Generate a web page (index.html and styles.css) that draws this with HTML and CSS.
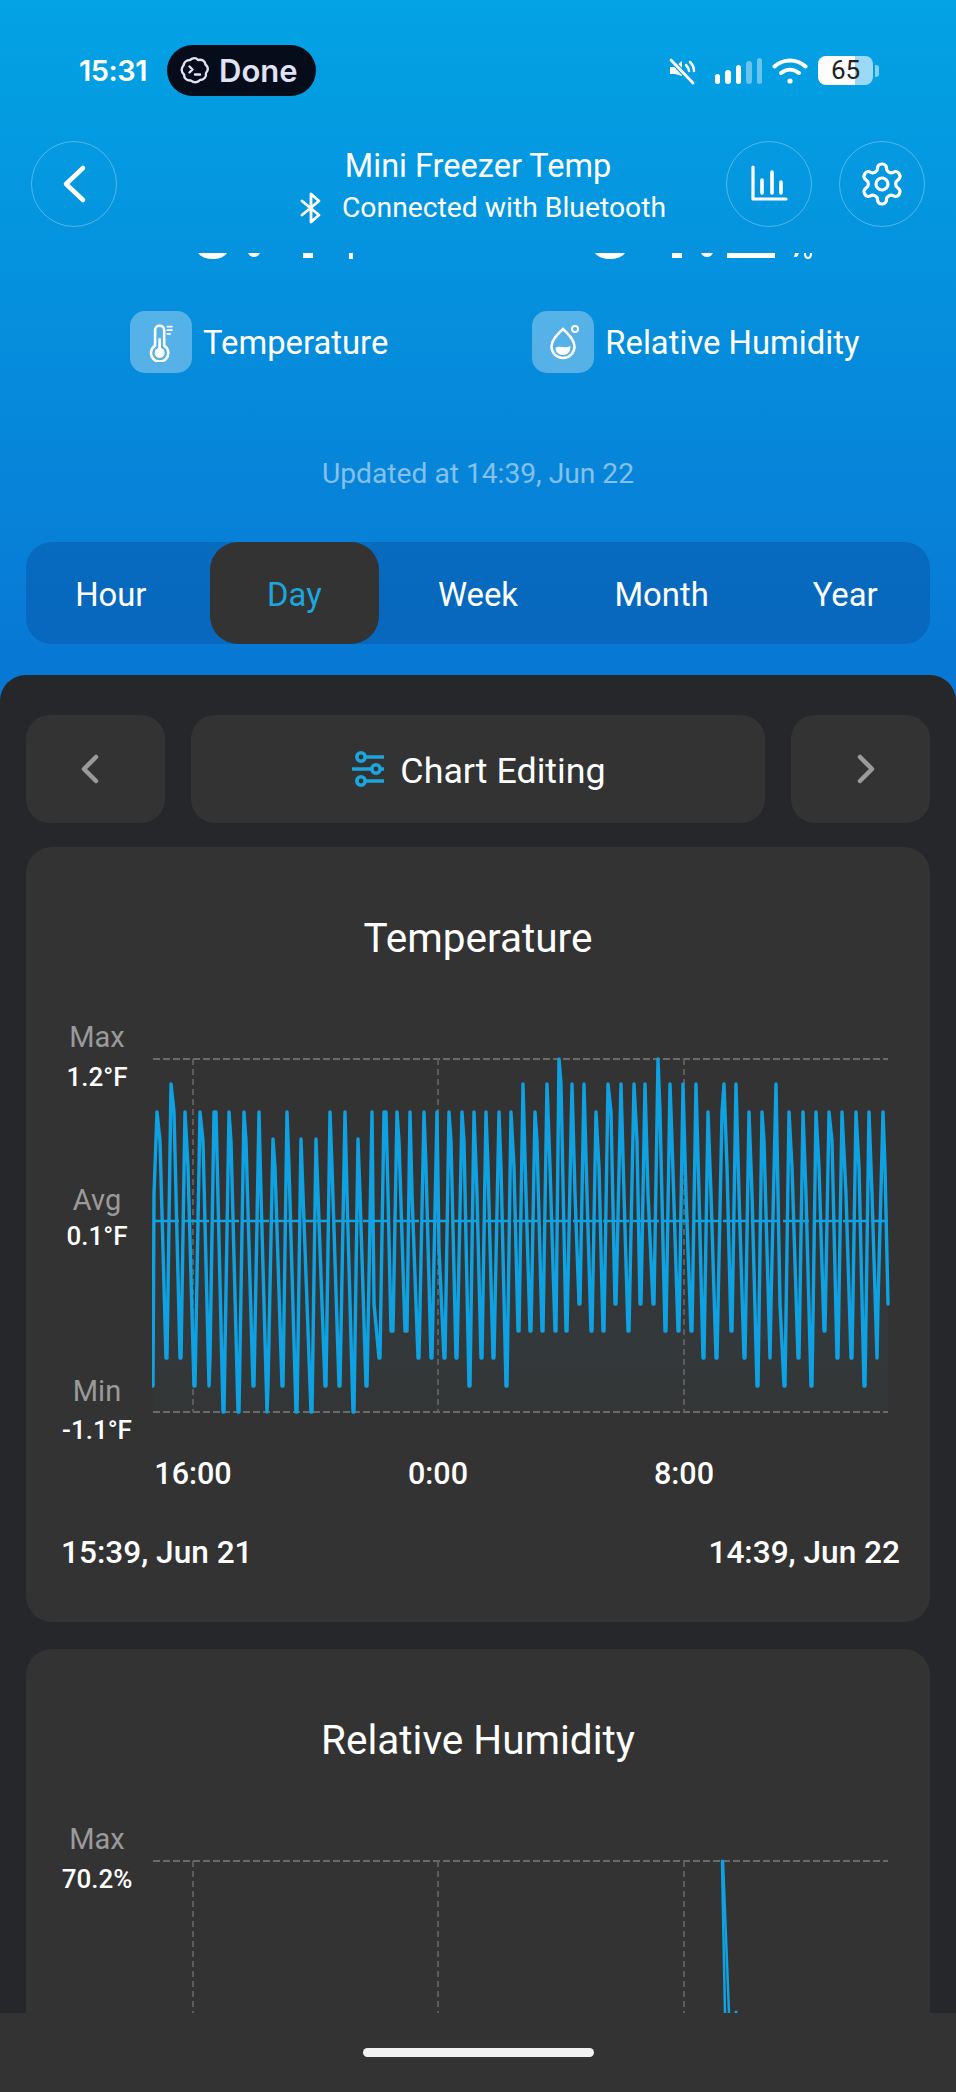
FILE: index.html
```html
<!DOCTYPE html>
<html>
<head>
	<meta charset="utf-8">
	<title>Mini Freezer Temp</title>
	<link rel="stylesheet" href="styles.css">
</head>

<body>

	<div class="screen">

		<div class="status">
			<span class="time">15:31</span>
			<div class="pill">
				<svg width="32" height="32" viewBox="0 0 32 32" fill="none" stroke="#dfe3f5" stroke-width="2.400" stroke-linecap="round" stroke-linejoin="round">
					<path d="M11 5c3-2.600 6-2.400 8 0 4-1 7 1 7.500 4.500 3 2.500 3 6 .5 8.500 .5 4-2 7-6 7-2.500 3-6.500 3-9 .5-4 .5-7-2-7-6-3-2.500-3-6.500-.5-9C5 7.500 7.500 5 11 5z"/>
					<path d="M10.500 11.500l3 3-3 3M16 19.500h5"/>
				</svg>
				<span>Done</span>
			</div>
			<div class="status-icons">
				<svg width="28" height="28" viewBox="0 0 28 28" fill="#fff">
					<path d="M2 10h5l7-6v15L7 17H2z"/>
					<path d="M18 8c2 2 3 4 3 6M22 5c2.500 2.500 4 6 4 9" fill="none" stroke="#fff" stroke-width="2.500" stroke-linecap="round"/>
					<path d="M3 3l22 23" stroke="#0a9ae0" stroke-width="5"/>
					<path d="M3 3l22 23" stroke="#fff" stroke-width="2.800" stroke-linecap="round"/>
				</svg>
				<div class="signal">
					<i class="s1"></i><i class="s2"></i><i class="s3"></i><i class="s4 dim"></i><i class="s5 dim"></i>
				</div>
				<svg class="wifi" width="36" height="28" viewBox="0 0 36 28" fill="none" stroke="#fff" stroke-width="4" stroke-linecap="round">
					<path d="M2.500 9.500c9-8 22-8 31 0"/>
					<path d="M9 16c5.500-4.500 12.500-4.500 18 0"/>
					<circle cx="18" cy="24" r="2.600" fill="#fff" stroke="none"/>
				</svg>
				<div class="battery">
					<div class="battery-body">65</div>
					<div class="battery-cap"></div>
				</div>
			</div>
		</div>

		<div class="topbar">
			<button class="round">
				<svg width="40" height="44" viewBox="0 0 40 44" fill="none" stroke="#fff" stroke-width="4.500" stroke-linecap="round" stroke-linejoin="round">
					<path d="M29 6L12 22l17 16"/>
				</svg>
			</button>
			<div class="title">
				<div class="name">Mini Freezer Temp</div>
				<div class="conn">
					<svg width="26" height="32" viewBox="0 0 24 32" fill="none" stroke="#fff" stroke-width="2.800" stroke-linecap="round" stroke-linejoin="round">
						<path d="M3 9l17 14-8 7V2l8 7L3 23"/>
					</svg>
					<span>Connected with Bluetooth</span>
				</div>
			</div>
			<div class="topbar-right">
				<button class="round">
					<svg width="44" height="44" viewBox="0 0 44 44" fill="none" stroke="#fff" stroke-width="3.200" stroke-linecap="round" stroke-linejoin="round">
						<path d="M6 5v32h33"/>
						<path d="M15 18v13M25 10v21M34 20v11" stroke-width="3.600"/>
					</svg>
				</button>
				<button class="round">
					<svg width="48" height="48" viewBox="0 0 24 24" fill="none" stroke="#fff" stroke-width="1.600" stroke-linecap="round" stroke-linejoin="round">
						<path d="M12.220 2h-.44a2 2 0 0 0-2 2v.18a2 2 0 0 1-1 1.730l-.43.25a2 2 0 0 1-2 0l-.15-.08a2 2 0 0 0-2.730.73l-.22.38a2 2 0 0 0 .73 2.730l.15.1a2 2 0 0 1 1 1.720v.51a2 2 0 0 1-1 1.740l-.15.09a2 2 0 0 0-.73 2.730l.22.38a2 2 0 0 0 2.730.73l.15-.08a2 2 0 0 1 2 0l.43.25a2 2 0 0 1 1 1.730V20a2 2 0 0 0 2 2h.44a2 2 0 0 0 2-2v-.18a2 2 0 0 1 1-1.730l.43-.25a2 2 0 0 1 2 0l.15.08a2 2 0 0 0 2.730-.73l.22-.39a2 2 0 0 0-.73-2.730l-.15-.08a2 2 0 0 1-1-1.740v-.5a2 2 0 0 1 1-1.740l.15-.09a2 2 0 0 0 .73-2.730l-.22-.38a2 2 0 0 0-2.730-.73l-.15.08a2 2 0 0 1-2 0l-.43-.25a2 2 0 0 1-1-1.730V4a2 2 0 0 0-2-2z"/>
						<circle cx="12" cy="12" r="3"/>
					</svg>
				</button>
			</div>
		</div>

		<!-- bottoms of the big readings, scrolled away under the header -->
		<svg class="cutoff" width="956" height="7" viewBox="0 0 956 7" fill="#fff">
			<path d="M198 0h29c-4 5-9 6-14 6s-11-1-15-6z"/>
			<path d="M248 0h12c-2 3-3 4-6 4s-4-1-6-4z"/>
			<rect x="303" y="0" width="10" height="5"/>
			<rect x="349" y="0" width="4" height="6"/>
			<path d="M595 0h30c-4 5-10 6-15 6s-11-1-15-6z"/>
			<rect x="672" y="0" width="10" height="5"/>
			<path d="M701 0h12c-2 3-3 4-6 4s-4-1-6-4z"/>
			<rect x="727" y="0" width="48" height="5"/>
			<path d="M795 0h4l-2 4h-3zM804 0h2c0 3 1 4 2 4s2-1 2-4h2c0 4-1 6-4 6s-4-2-4-6z"/>
		</svg>

		<div class="readings">
			<div class="reading">
				<div class="reading-icon">
					<svg width="40" height="40" viewBox="0 0 44 44" fill="none" stroke="#fff" stroke-width="2.800" stroke-linecap="round">
						<path d="M15.500 26V9a5 5 0 0 1 10 0v17a9.500 9.500 0 1 1-10 0z"/>
						<circle cx="20.500" cy="34" r="5.500" fill="#fff" stroke="none"/>
						<path d="M20.500 30V19" stroke-width="3"/>
						<path d="M29 5h5M29 9h5M29 13h3" stroke-width="2"/>
					</svg>
				</div>
				<span>Temperature</span>
			</div>
			<div class="reading">
				<div class="reading-icon">
					<svg width="44" height="44" viewBox="0 0 44 44" fill="none" stroke="#fff" stroke-width="2.500">
						<path d="M22 9c5 5 11.500 10.500 11.500 17.500a11.500 11.500 0 0 1-23 0C10.500 19.500 17 14 22 9z"/>
						<path d="M14.500 28c4-3 9 1 15-2 0 6-3 9-7.500 9s-7.500-3-7.500-7z" fill="#fff" stroke="none"/>
						<circle cx="34" cy="9" r="3" stroke-width="2"/>
					</svg>
				</div>
				<span>Relative Humidity</span>
			</div>
		</div>

		<div class="updated">Updated at 14:39, Jun 22</div>

		<div class="tabs">
			<div class="tab">Hour</div>
			<div class="tab active">Day</div>
			<div class="tab">Week</div>
			<div class="tab">Month</div>
			<div class="tab">Year</div>
		</div>

		<div class="panel">

			<div class="editbar">
				<div class="editbtn side prev">
					<svg width="20" height="30" viewBox="0 0 20 30" fill="none" stroke="#9a9a9a" stroke-width="4.500" stroke-linecap="round" stroke-linejoin="round">
						<path d="M16 3L4 15l12 12"/>
					</svg>
				</div>
				<div class="editbtn mid">
					<svg width="36" height="38" viewBox="0 0 36 38" fill="none" stroke="#1ba6de" stroke-width="3.600">
						<path d="M15 7h19M2 19h20M30 19h4M15 31h19"/>
						<circle cx="11" cy="7" r="4.200"/>
						<circle cx="26" cy="19" r="4.200"/>
						<circle cx="11" cy="31" r="4.200"/>
					</svg>
					<span>Chart Editing</span>
				</div>
				<div class="editbtn side next">
					<svg width="20" height="30" viewBox="0 0 20 30" fill="none" stroke="#9a9a9a" stroke-width="4.500" stroke-linecap="round" stroke-linejoin="round">
						<path d="M4 3l12 12L4 27"/>
					</svg>
				</div>
			</div>

			<div class="card">
				<h2>Temperature</h2>
				<div class="chart">
					<div class="axis">
						<div class="axis-group g-max"><span>Max</span><b>1.2°F</b></div>
						<div class="axis-group g-avg"><span>Avg</span><b>0.1°F</b></div>
						<div class="axis-group g-min"><span>Min</span><b>-1.1°F</b></div>
					</div>
					<svg class="plot" width="738" height="362" viewBox="152 1056 738 362" fill="none">
						<defs>
							<linearGradient id="under" x1="0" y1="0" x2="0" y2="1">
								<stop offset="0" stop-color="#3fa0c8" stop-opacity="0"/>
								<stop offset="0.6" stop-color="#3fa0c8" stop-opacity="0.05"/>
								<stop offset="1" stop-color="#3fa0c8" stop-opacity="0.02"/>
							</linearGradient>
						</defs>
						<rect x="153" y="1230" width="735" height="183" fill="url(#under)"/>
						<path class="grid" d="M153 1060H888M153 1413H888"/>
						<path class="grid upright" d="M193 1060V1413M438 1060V1413M684 1060V1413"/>
						<path class="avg" d="M153 1222H888"/>
						<polyline class="line" points="153,1387 154,1195 157,1113 160,1142 166,1359 167,1359 171,1085 174,1113 180,1359 181,1359 185,1113 188,1168 194,1387 195,1387 200,1113 203,1142 209,1387 210,1359 214,1113 216,1113 223,1413 224,1413 229,1113 231,1142 238,1413 239,1413 244,1113 246,1142 253,1387 254,1387 259,1113 261,1195 267,1413 268,1387 273,1140 275,1168 282,1387 283,1387 287,1113 289,1168 296,1413 297,1413 301,1140 303,1195 311,1413 312,1413 316,1140 318,1195 325,1387 326,1387 330,1113 332,1168 339,1387 340,1387 345,1113 347,1195 353,1413 354,1413 358,1140 360,1195 366,1387 367,1387 372,1113 374,1305 379,1359 380,1359 384,1113 386,1113 388,1195 391,1332 393,1332 397,1113 399,1142 405,1332 407,1332 410,1113 412,1195 418,1359 419,1359 424,1113 426,1168 431,1359 432,1359 437,1113 439,1250 444,1359 445,1359 449,1113 451,1142 456,1359 457,1359 462,1113 464,1142 469,1387 470,1387 474,1113 477,1195 481,1359 482,1359 486,1113 488,1168 493,1359 494,1359 499,1113 501,1168 506,1387 507,1387 511,1113 514,1168 518,1332 519,1332 523,1085 526,1195 530,1332 531,1332 535,1113 537,1142 542,1332 543,1332 547,1085 550,1168 555,1332 556,1332 559,1060 561,1085 566,1332 567,1332 572,1085 575,1195 579,1305 580,1305 584,1085 587,1195 591,1332 592,1332 596,1113 599,1168 603,1332 604,1332 608,1085 611,1113 615,1305 616,1305 621,1085 624,1195 628,1332 629,1332 634,1085 637,1142 640,1305 641,1305 645,1085 648,1195 653,1305 654,1305 658,1060 660,1113 665,1332 666,1332 670,1085 672,1142 678,1332 679,1332 683,1085 686,1195 691,1332 692,1332 696,1085 699,1195 703,1359 704,1359 708,1113 711,1195 716,1359 717,1359 722,1113 724,1085 727,1168 731,1332 732,1332 736,1085 739,1195 744,1359 745,1359 749,1113 752,1195 757,1387 758,1387 762,1113 764,1142 770,1359 771,1305 776,1085 780,1305 784,1387 785,1387 789,1113 792,1168 798,1359 799,1359 803,1113 806,1195 811,1387 812,1387 816,1113 819,1168 824,1332 825,1332 829,1113 832,1142 837,1359 838,1359 842,1113 846,1195 851,1359 852,1359 856,1113 859,1168 864,1387 865,1387 869,1113 872,1195 877,1359 878,1305 883,1113 885,1168 888,1305"/>
					</svg>
				</div>
				<div class="xlabels">
					<span>16:00</span><span>0:00</span><span>8:00</span>
				</div>
				<div class="range">
					<span>15:39, Jun 21</span><span>14:39, Jun 22</span>
				</div>
			</div>

			<div class="card">
				<h2>Relative Humidity</h2>
				<div class="chart">
					<div class="axis">
						<div class="axis-group g-max"><span>Max</span><b>70.2%</b></div>
					</div>
					<svg class="plot" width="738" height="362" viewBox="152 1857 738 362" fill="none">
						<path class="grid" d="M153 1861H888"/>
						<path class="grid upright" d="M193 1861V2213M438 1861V2213M684 1861V2213"/>
						<polyline class="line thin" points="722,1861 725,2013"/>
						<polyline class="line thin" points="723,1861 729,2013"/>
						<circle cx="736" cy="2012" r="1.500" fill="#0ea5e6"/>
					</svg>
				</div>
			</div>

		</div>

		<div class="homebar">
			<div class="indicator"></div>
		</div>

	</div>

</body>
</html>
```

FILE: styles.css
```css
* {
	padding: 0;
	margin: 0;
	box-sizing: border-box;
}
body {
	font-family: Roboto, "Liberation Sans", sans-serif;
	color: #fff;
}
.screen {
	display: flex;
	flex-direction: column;
	width: 956px;
	height: 2092px;
	overflow: hidden;
	background: linear-gradient(180deg, #03a3e4 0, #0876d4 700px);
}

/* status bar */
.status {
	display: flex;
	align-items: center;
	height: 51px;
	margin-top: 45px;
	padding: 0 79px;
}
.time {
	width: 88px;
	font-family: Inter, sans-serif;
	font-size: 29px;
	font-weight: 600;
	letter-spacing: -0.5px;
}
.pill {
	display: flex;
	align-items: center;
	gap: 8px;
	width: 149px;
	height: 51px;
	padding-left: 12px;
	border-radius: 26px;
	background: #060c1a;
	color: #dfe3f5;
	font-family: Inter, sans-serif;
	font-size: 31px;
	font-weight: 600;
}
.status-icons {
	display: flex;
	align-items: center;
	margin-left: auto;
	margin-right: -2px;
}
.signal {
	display: flex;
	align-items: flex-end;
	gap: 5px;
	height: 26px;
	margin-left: 19px;
}
.signal i {
	display: block;
	width: 5.500px;
	border-radius: 3px;
	background: #fff;
}
.signal .dim {
	background: rgba(255,255,255,.4);
}
.s1 { height: 10px; }
.s2 { height: 14px; }
.s3 { height: 19px; }
.s4 { height: 23px; }
.s5 { height: 26px; }
.wifi {
	margin-left: 10px;
}
.battery {
	display: flex;
	align-items: center;
	gap: 2px;
	margin-left: 10px;
}
.battery-body {
	width: 55px;
	height: 29px;
	border-radius: 8px;
	background: linear-gradient(90deg, #fff 0, #fff 68%, rgba(255,255,255,.6) 68%);
	color: #222;
	font-size: 26px;
	line-height: 29px;
	text-align: center;
}
.battery-cap {
	width: 4px;
	height: 12px;
	border-radius: 0 3px 3px 0;
	background: rgba(255,255,255,.5);
}

/* header */
.topbar {
	display: grid;
	grid-template-columns: 1fr auto 1fr;
	align-items: center;
	height: 86px;
	margin-top: 45px;
	padding: 0 31px;
}
.round {
	display: flex;
	align-items: center;
	justify-content: center;
	width: 86px;
	height: 86px;
	border: 1.500px solid rgba(255,255,255,.3);
	border-radius: 50%;
	background: transparent;
}
.topbar-right {
	display: flex;
	gap: 27px;
	justify-self: end;
}
.title {
	display: flex;
	flex-direction: column;
	align-items: center;
	padding-top: 3px;
}
.name {
	font-size: 32.500px;
	line-height: 44px;
	white-space: nowrap;
}
.conn {
	display: flex;
	align-items: center;
	gap: 18px;
	margin-top: 1px;
	padding-left: 8px;
	font-size: 28.300px;
	line-height: 38px;
	white-space: nowrap;
}
.cutoff {
	display: block;
	flex: none;
	margin-top: 26px;
}

/* temperature / humidity labels */
.readings {
	display: flex;
	height: 62px;
	margin-top: 51px;
	padding-left: 130px;
}
.reading {
	display: flex;
	flex: none;
	align-items: center;
	gap: 11px;
	margin-right: 144px;
	font-size: 32.800px;
	white-space: nowrap;
}
.reading span {
	padding-top: 2px;
}
.reading-icon {
	display: flex;
	align-items: center;
	justify-content: center;
	width: 62px;
	height: 62px;
	border-radius: 15px;
	background: rgba(255,255,255,.32);
}
.updated {
	margin-top: 83px;
	color: rgba(255,255,255,.5);
	font-size: 28.200px;
	line-height: 36px;
	text-align: center;
}

/* range tabs */
.tabs {
	display: flex;
	flex: none;
	gap: 14px;
	justify-content: center;
	height: 102px;
	margin: 50px 26px 0;
	border-radius: 26px;
	background: rgba(8,90,170,.55);
}
.tab {
	display: flex;
	width: 170px;
	align-items: center;
	justify-content: center;
	padding-top: 3px;
	border-radius: 28px;
	font-size: 32.800px;
}
.tab.active {
	background: #333;
	color: #1ba6de;
}

/* dark panel */
.panel {
	flex: none;
	height: 1338px;
	margin-top: 31px;
	padding: 40px 26px 0;
	overflow: hidden;
	border-radius: 26px 26px 0 0;
	background: #26272a;
}
.editbar {
	display: flex;
	gap: 26px;
	height: 108px;
}
.editbtn {
	display: flex;
	align-items: center;
	justify-content: center;
	border-radius: 24px;
	background: #333;
}
.editbtn.side {
	width: 139px;
}
.editbtn.prev {
	padding-right: 11px;
}
.editbtn.next {
	padding-left: 11px;
}
.editbtn.mid {
	flex: 1;
	gap: 14px;
	font-size: 35.800px;
}
.editbtn.mid span {
	padding-top: 3px;
}
.card {
	height: 775px;
	margin-top: 24px;
	padding-top: 66px;
	border-radius: 26px;
	background: #333;
}
.card + .card {
	margin-top: 27px;
}
.card h2 {
	font-size: 40.500px;
	font-weight: 400;
	line-height: 50px;
	text-align: center;
}
.chart {
	display: flex;
	margin-top: 92px;
}
.axis {
	width: 126px;
	flex: none;
	text-align: center;
}
.axis-group {
	display: flex;
	flex-direction: column;
	align-items: center;
	padding-left: 16px;
}
.axis-group span {
	color: #9a9a9a;
	font-size: 29px;
	line-height: 34px;
}
.axis-group b {
	font-size: 26px;
	font-weight: 500;
	line-height: 38px;
}
.g-max {
	margin-top: -35px;
}
.g-max b {
	margin-top: 4px;
}
.g-avg {
	margin-top: 87px;
}
.g-min {
	margin-top: 119px;
}
.g-min b {
	margin-top: 3px;
}
.plot {
	display: block;
	flex: none;
}
.grid {
	stroke: #6a6a6a;
	stroke-width: 2;
	stroke-dasharray: 7 3;
}
.grid.upright {
	stroke: #5c5c5c;
	stroke-dasharray: 6 4;
}
.avg {
	stroke: #16a2e0;
	stroke-width: 2.500;
	stroke-dasharray: 26 4;
}
.line {
	fill: none;
	stroke: #0ea2e2;
	stroke-width: 3.400;
	stroke-linejoin: round;
	stroke-linecap: round;
}
.thin {
	stroke-width: 2.500;
}
.xlabels {
	position: relative;
	height: 38px;
	margin-top: 6px;
	font-size: 30.500px;
	font-weight: 500;
	line-height: 38px;
}
.xlabels span {
	position: absolute;
	transform: translateX(-50%);
}
.xlabels span:nth-child(1) { left: 167px; }
.xlabels span:nth-child(2) { left: 412px; }
.xlabels span:nth-child(3) { left: 658px; }
.range {
	display: flex;
	justify-content: space-between;
	margin-top: 41px;
	padding: 0 30px 0 35px;
	font-size: 31.600px;
	font-weight: 500;
	line-height: 38px;
}
.homebar {
	display: flex;
	flex: none;
	justify-content: center;
	height: 79px;
	padding-top: 35px;
	background: #333;
}
.indicator {
	width: 231px;
	height: 9px;
	border-radius: 5px;
	background: #f2f2f2;
}
```
